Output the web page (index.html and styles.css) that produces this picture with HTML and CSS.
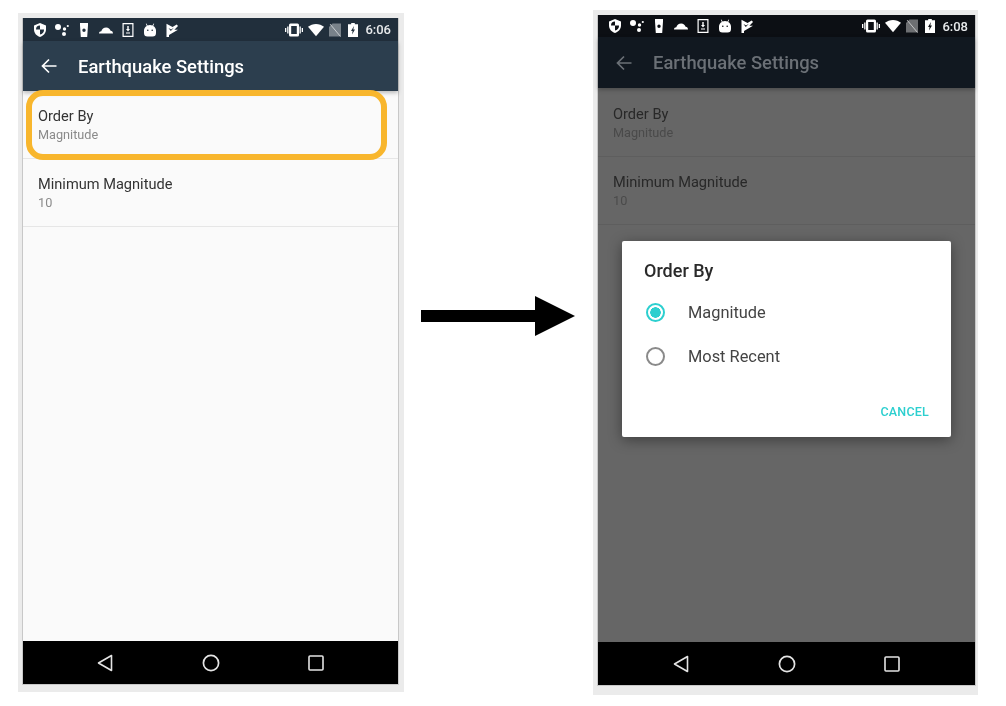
FILE: index.html
```html
<!DOCTYPE html>
<html lang="en">
<head>
    <meta charset="UTF-8">
    <meta name="viewport" content="width=device-width, initial-scale=1.0">
    <title>Earthquake Settings</title>
    <link rel="stylesheet" href="styles.css">
</head>
<body>
    <svg class="defs" width="0" height="0">
        <symbol id="i-shield" viewBox="0 0 14 14"><path fill="currentColor" fill-rule="evenodd" d="M7 0l6 2.4v4c0 3.5-2.5 6.3-6 7.6-3.500-1.300-6-4.100-6-7.600v-4zM7 2.500a4 4 0 0 0-4 4h4zM7 6.500v5a4.500 4.500 0 0 0 4-5z"/></symbol>
        <symbol id="i-dots" viewBox="0 0 14 14"><g fill="currentColor"><circle cx="3" cy="4" r="3"/><circle cx="9.500" cy="6" r="1.700"/><circle cx="9" cy="11" r="2"/><circle cx="12.800" cy="3" r="1.100"/></g></symbol>
        <symbol id="i-cup" viewBox="0 0 14 14"><path fill="currentColor" fill-rule="evenodd" d="M3 0h8v2.500l-.8 11.500H3.800L3 2.500zM7 5.500a1.700 1.700 0 1 0 0 3.400 1.700 1.700 0 0 0 0-3.400z"/></symbol>
        <symbol id="i-cloud" viewBox="0 0 14 14"><path fill="currentColor" d="M0 10.500c0-1.400 1-2.200 2.300-2.200C2.900 6 4.700 4.500 7.200 4.500c2.200 0 3.800 1.300 4.400 3.200 1.500.1 2.400 1.200 2.400 2.800z"/></symbol>
        <symbol id="i-phone" viewBox="0 0 14 14"><path fill="none" stroke="currentColor" stroke-width="1.200" d="M2.100.6h9.800v12.800H2.100z"/><path fill="currentColor" d="M6.300 3h1.400v3H9L7 8.500 5 6h1.300zM5 9.500h4v1H5z"/></symbol>
        <symbol id="i-android" viewBox="0 0 14 14"><path fill="currentColor" fill-rule="evenodd" d="M3.800 3L2.800.8l.6-.3 1.100 2.100a6 6 0 0 1 5 0L10.600.5l.6.3L10.200 3c1.800 1 2.800 2.600 2.800 4.500V10a3.500 3.500 0 0 1-3.500 3.500h-5A3.500 3.500 0 0 1 1 10V7.500C1 5.600 2 4 3.800 3zM4.800 6.500a.8.800 0 1 0 0 1.600.8.800 0 0 0 0-1.600zM9.200 6.500a.8.800 0 1 0 0 1.600.8.800 0 0 0 0-1.600z"/></symbol>
        <symbol id="i-flag" viewBox="0 0 14 14"><path fill="currentColor" fill-rule="evenodd" d="M1.500.8l6 3.200 4.200-2.600 1.300 1.500-3.600 3.800H13L4 12v2H1.500zM3.500 5l2.300 3 3-3.200-2.700 1.700z"/></symbol>
        <symbol id="i-vibrate" viewBox="0 0 18 14"><path fill="currentColor" fill-rule="evenodd" d="M5.500 .5h7a1.500 1.500 0 0 1 1.500 1.500v10a1.500 1.500 0 0 1-1.500 1.500h-7A1.500 1.500 0 0 1 4 12V2A1.500 1.500 0 0 1 5.500 .5zM6.200 3v8h5.600V3z"/><path fill="currentColor" d="M0 5h1.300v4H0zM2.200 3.500h1.300v7H2.200zM14.500 3.500h1.300v7h-1.300zM16.700 5H18v4h-1.300z"/></symbol>
        <symbol id="i-wifi" viewBox="0 0 16 14"><path fill="currentColor" d="M0 3.800C2.200 1.900 5 .9 8 .9s5.800 1 8 2.900L8 13.200z"/></symbol>
        <symbol id="i-nosim" viewBox="0 0 12 14"><path fill="currentColor" opacity=".4" d="M3.500.5H12v13H0V4z"/><path stroke="currentColor" stroke-width="1" opacity=".6" d="M1 1l10.500 12.500"/></symbol>
        <symbol id="i-battery" viewBox="0 0 10 14"><path fill="currentColor" fill-rule="evenodd" d="M3.200 0h3.600v1.300H10V14H0V1.300h3.200zM6 3L3 8h1.600L4 11.500 7 6.500H5.300z"/></symbol>
        <symbol id="i-arrow" viewBox="0 0 16 16"><path fill="none" stroke="currentColor" stroke-width="1.700" d="M15.500 8H1.500M8 1.500L1.500 8 8 14.500"/></symbol>
        <symbol id="i-back" viewBox="0 0 16 18"><path fill="none" stroke="currentColor" stroke-width="1.600" stroke-linejoin="round" d="M14.500 1.500v15L1.500 9z"/></symbol>
        <symbol id="i-home" viewBox="0 0 18 18"><circle fill="none" stroke="currentColor" stroke-width="1.700" cx="9" cy="9" r="7.600"/></symbol>
        <symbol id="i-recent" viewBox="0 0 16 16"><rect fill="none" stroke="currentColor" stroke-width="1.600" x="1" y="1" width="14" height="14" rx="1"/></symbol>
    </svg>

    <main class="figure">
        <section class="phone phone-left">
            <div class="screen">
                <div class="status-bar">
                    <div class="status-icons">
                        <svg class="ic"><use href="#i-shield"/></svg>
                        <svg class="ic"><use href="#i-dots"/></svg>
                        <svg class="ic"><use href="#i-cup"/></svg>
                        <svg class="ic"><use href="#i-cloud"/></svg>
                        <svg class="ic"><use href="#i-phone"/></svg>
                        <svg class="ic"><use href="#i-android"/></svg>
                        <svg class="ic"><use href="#i-flag"/></svg>
                    </div>
                    <div class="status-right">
                        <svg class="ic-vibrate"><use href="#i-vibrate"/></svg>
                        <svg class="ic-wifi"><use href="#i-wifi"/></svg>
                        <svg class="ic-sim"><use href="#i-nosim"/></svg>
                        <svg class="ic-batt"><use href="#i-battery"/></svg>
                        <span class="clock">6:06</span>
                    </div>
                </div>
                <header class="app-bar">
                    <svg class="ic-up"><use href="#i-arrow"/></svg>
                    <h1>Earthquake Settings</h1>
                </header>
                <div class="content">
                    <div class="pref">
                        <div class="pref-title">Order By</div>
                        <div class="pref-value">Magnitude</div>
                    </div>
                    <div class="pref">
                        <div class="pref-title">Minimum Magnitude</div>
                        <div class="pref-value">10</div>
                    </div>
                    <div class="highlight"></div>
                </div>
                <nav class="nav-bar">
                    <span class="nav-cell"><svg class="ic-back"><use href="#i-back"/></svg></span>
                    <span class="nav-cell"><svg class="ic-home"><use href="#i-home"/></svg></span>
                    <span class="nav-cell"><svg class="ic-recent"><use href="#i-recent"/></svg></span>
                </nav>
            </div>
        </section>

        <svg class="big-arrow" viewBox="0 0 154 40"><path d="M0 14h114V0l40 20-40 20V26H0z"/></svg>

        <section class="phone phone-right dimmed">
            <div class="screen">
                <div class="status-bar">
                    <div class="status-icons">
                        <svg class="ic"><use href="#i-shield"/></svg>
                        <svg class="ic"><use href="#i-dots"/></svg>
                        <svg class="ic"><use href="#i-cup"/></svg>
                        <svg class="ic"><use href="#i-cloud"/></svg>
                        <svg class="ic"><use href="#i-phone"/></svg>
                        <svg class="ic"><use href="#i-android"/></svg>
                        <svg class="ic"><use href="#i-flag"/></svg>
                    </div>
                    <div class="status-right">
                        <svg class="ic-vibrate"><use href="#i-vibrate"/></svg>
                        <svg class="ic-wifi"><use href="#i-wifi"/></svg>
                        <svg class="ic-sim"><use href="#i-nosim"/></svg>
                        <svg class="ic-batt"><use href="#i-battery"/></svg>
                        <span class="clock">6:08</span>
                    </div>
                </div>
                <header class="app-bar">
                    <svg class="ic-up"><use href="#i-arrow"/></svg>
                    <h1>Earthquake Settings</h1>
                </header>
                <div class="content">
                    <div class="pref">
                        <div class="pref-title">Order By</div>
                        <div class="pref-value">Magnitude</div>
                    </div>
                    <div class="pref">
                        <div class="pref-title">Minimum Magnitude</div>
                        <div class="pref-value">10</div>
                    </div>
                    <div class="dialog">
                        <h2>Order By</h2>
                        <div class="option"><span class="radio radio-on"></span>Magnitude</div>
                        <div class="option"><span class="radio"></span>Most Recent</div>
                        <div class="dialog-actions">CANCEL</div>
                    </div>
                </div>
                <nav class="nav-bar">
                    <span class="nav-cell"><svg class="ic-back"><use href="#i-back"/></svg></span>
                    <span class="nav-cell"><svg class="ic-home"><use href="#i-home"/></svg></span>
                    <span class="nav-cell"><svg class="ic-recent"><use href="#i-recent"/></svg></span>
                </nav>
            </div>
        </section>
    </main>
</body>
</html>
```

FILE: styles.css
```css
body {
    margin: 0;
    background-color: #fff;
    font-family: "Roboto", "Liberation Sans", sans-serif;
}

.defs {
    position: absolute;
}

.figure {
    display: flex;
    align-items: flex-start;
    padding-left: 18px;
}

/* phones */
.phone {
    box-sizing: border-box;
    padding: 5px 5px 7px 4px;
    background-color: #ebebeb;
    filter: blur(0.35px);
}

.phone-left {
    width: 386px;
    height: 679px;
    margin-top: 13px;
}

.phone-right {
    width: 385px;
    height: 685px;
    margin-top: 10px;
    padding-right: 2px;
    padding-bottom: 9px;
}

.screen {
    display: flex;
    flex-direction: column;
    height: 100%;
    box-sizing: border-box;
    border: 1px solid #c8c8c8;
    border-width: 0 1px 1px 1px;
}

/* status bar */
.status-bar {
    display: flex;
    justify-content: space-between;
    align-items: center;
    height: 23px;
    padding: 0 7px 0 10px;
    background-color: #212f3c;
    color: #fff;
}

.phone-right .status-bar {
    height: 22px;
    background-color: #0c0f14;
}

.status-icons,
.status-right {
    display: flex;
    align-items: center;
}

.status-icons {
    gap: 8px;
}

.ic {
    width: 14px;
    height: 14px;
}

.ic-vibrate {
    width: 18px;
    height: 14px;
}

.ic-wifi {
    width: 16px;
    height: 14px;
    margin-left: 5px;
}

.ic-sim {
    width: 12px;
    height: 14px;
    margin-left: 5px;
}

.ic-batt {
    width: 10px;
    height: 14px;
    margin-left: 7px;
}

.clock {
    margin-left: 7px;
    font-size: 13px;
    font-weight: 500;
    color: #e8eaec;
}

/* app bar */
.app-bar {
    display: flex;
    align-items: center;
    height: 50px;
    padding-left: 18px;
    background-color: #2c3e4e;
    color: #fff;
    box-shadow: 0 2px 4px rgba(0, 0, 0, 0.25);
    position: relative;
    z-index: 1;
}

.ic-up {
    width: 16px;
    height: 16px;
}

.app-bar h1 {
    margin: 0 0 0 21px;
    font-size: 18.400px;
    font-weight: 500;
}

.dimmed .app-bar {
    height: 51px;
    background-color: #111820;
    color: #6b7076;
}

/* settings list */
.content {
    flex: 1;
    position: relative;
    background-color: #fafafa;
}

.dimmed .content {
    padding-top: 1px;
    background-color: #666;
}

.pref {
    box-sizing: border-box;
    height: 68px;
    padding: 17px 0 0 15px;
    border-bottom: 1px solid #e6e6e6;
}

.dimmed .pref {
    border-bottom-color: #5e5e5e;
}

.pref-title {
    font-size: 14.600px;
    line-height: 16px;
    color: #333;
}

.pref-value {
    margin-top: 3px;
    font-size: 12.700px;
    line-height: 16px;
    color: #8a8a8a;
}

.dimmed .pref-title {
    color: #282828;
}

.dimmed .pref-value {
    color: #4a4a4a;
}

.highlight {
    position: absolute;
    left: 3px;
    top: -1px;
    width: 361px;
    height: 70px;
    box-sizing: border-box;
    border: 6px solid #f8b62d;
    border-radius: 17px;
    z-index: 2;
}

/* dialog */
.dialog {
    position: absolute;
    left: 24px;
    top: 153px;
    width: 329px;
    height: 196px;
    box-sizing: border-box;
    padding: 20px 22px 0;
    background-color: #fff;
    border-radius: 2px;
    box-shadow: 0 3px 14px rgba(0, 0, 0, 0.4);
}

.dialog h2 {
    margin: 0 0 9px;
    font-size: 18px;
    line-height: 20px;
    font-weight: 500;
    color: #2a2a2a;
}

.option {
    display: flex;
    align-items: center;
    height: 44px;
    font-size: 16.400px;
    color: #444;
}

.radio {
    box-sizing: border-box;
    width: 19px;
    height: 19px;
    margin: 0 23px 0 2px;
    border: 2px solid #8a8a8a;
    border-radius: 50%;
}

.radio-on {
    border-color: #2ccfcf;
    background: radial-gradient(circle, #2ccfcf 0 5px, #fff 5.500px);
}

.dialog-actions {
    margin-top: 26px;
    text-align: right;
    font-size: 12.500px;
    font-weight: 500;
    letter-spacing: 0.2px;
    color: #2ccfcf;
}

/* nav bar */
.nav-bar {
    display: flex;
    justify-content: center;
    align-items: center;
    height: 43px;
    background-color: #000;
    color: #e4e4e4;
}

.nav-cell {
    display: flex;
    justify-content: center;
    width: 105.500px;
}

.ic-back {
    width: 16px;
    height: 18px;
}

.ic-home {
    width: 18px;
    height: 18px;
}

.ic-recent {
    width: 16px;
    height: 16px;
}

/* arrow between the phones */
.big-arrow {
    flex: none;
    width: 154px;
    height: 40px;
    margin: 296px 18px 0 17px;
}
```
